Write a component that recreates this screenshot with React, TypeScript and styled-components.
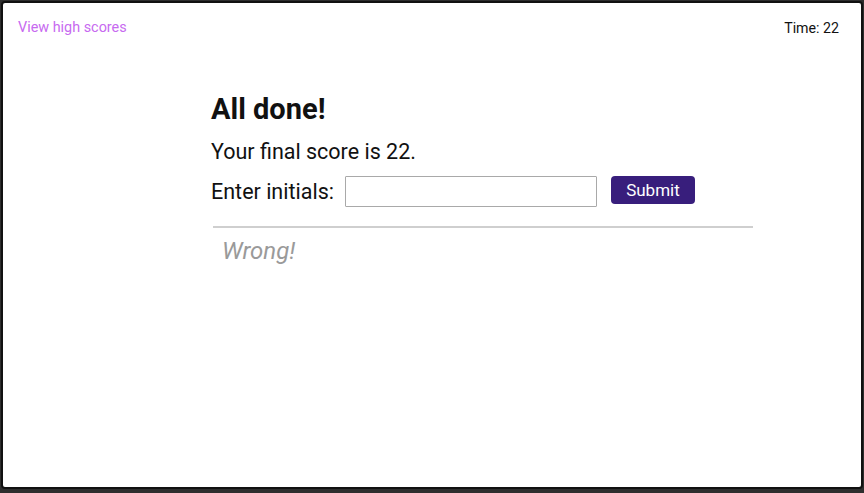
import React from "react";
import styled, { createGlobalStyle } from "styled-components";

const Global = createGlobalStyle`
  html, body { margin: 0; padding: 0; background: #d9d9d9; }
  body { font-family: Roboto, "Noto Sans", sans-serif; }
  * { box-sizing: border-box; }
`;

const Screen = styled.div`
  width: 864px;
  height: 493px;
  display: flex;
  flex-direction: column;
  background: #2e2e2e;
`;

const Frame = styled.div`
  margin: 1px 1px 0 1px;
  height: 488px;
  border: 2px solid #111;
  border-radius: 4px;
  background: #fff;
  display: flex;
  flex-direction: column;
`;

const TopBar = styled.header`
  display: flex;
  justify-content: space-between;
  align-items: center;
  padding: 16px 22px 0 15px;
  font-size: 14.4px;
  line-height: 18px;
`;

const HighScores = styled.a`
  color: #c76af0;
  text-decoration: none;
`;

const Timer = styled.div`
  color: #111;
  font-size: 14.2px;
`;

const Main = styled.main`
  padding: 55px 0 0 208px;
  width: 752px;
`;

const Title = styled.h1`
  margin: 0;
  font-size: 29px;
  font-weight: 700;
  line-height: 34px;
  color: #111;
`;

const Score = styled.p`
  margin: 13px 0 0 0;
  font-size: 21.5px;
  line-height: 26px;
  color: #111;
`;

const Form = styled.form`
  display: flex;
  align-items: center;
  margin-top: 11px;
`;

const Label = styled.label`
  font-size: 21.5px;
  color: #111;
  margin-right: 11px;
`;

const Input = styled.input`
  width: 252px;
  height: 31px;
  border: 1px solid #a9a9a9;
  border-radius: 1px;
  outline: none;
`;

const Submit = styled.button`
  margin-left: 14px;
  width: 84px;
  height: 28px;
  border: none;
  border-radius: 4px;
  background: #381e7c;
  color: #fff;
  font-family: Roboto, sans-serif;
  font-size: 17px;
  align-self: flex-start;
`;

const Divider = styled.hr`
  margin: 19px 0 0 2px;
  border: none;
  border-top: 2px solid #cfcfcf;
  width: 540px;
`;

const Feedback = styled.p`
  margin: 9px 0 0 11px;
  font-size: 24px;
  font-style: italic;
  color: #9a9a9a;
`;

export default function App() {
  return (
    <>
      <Global />
      <Screen>
        <Frame>
          <TopBar>
            <HighScores href="#">View high scores</HighScores>
            <Timer>Time: 22</Timer>
          </TopBar>
          <Main>
            <Title>All done!</Title>
            <Score>Your final score is 22.</Score>
            <Form onSubmit={(e) => e.preventDefault()}>
              <Label>Enter initials:</Label>
              <Input type="text" />
              <Submit type="submit">Submit</Submit>
            </Form>
            <Divider />
            <Feedback>Wrong!</Feedback>
          </Main>
        </Frame>
      </Screen>
    </>
  );
}
